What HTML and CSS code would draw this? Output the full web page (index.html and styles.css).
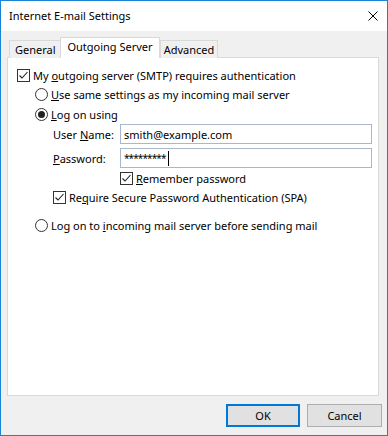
FILE: index.html
```html
<!DOCTYPE html>
<html>
<head>
<meta charset="utf-8">
<link rel="stylesheet" href="styles.css">
</head>
<body>
<div class="window">
  <div class="titlebar">
    <span class="title">Internet E-mail Settings</span>
    <svg class="close" width="10" height="10" viewBox="0 0 10 10"><path d="M0.5 0.5L9.5 9.5M9.5 0.5L0.5 9.5" stroke="#000" stroke-width="1" fill="none"/></svg>
  </div>
  <div class="body">
    <div class="tabs">
      <div class="tab">General</div>
      <div class="tab active">Outgoing Server</div>
      <div class="tab">Advanced</div>
    </div>
    <div class="panel">
      <div class="row r1">
        <span class="check on"><svg width="11" height="11" viewBox="0 0 11 11"><path d="M1.5 5.5L4 8L9.5 2" stroke="#222" stroke-width="1.1" fill="none"/></svg></span>
        <span class="lbl">My <u>o</u>utgoing server (SMTP) requires authentication</span>
      </div>
      <div class="row r2">
        <span class="radio"></span>
        <span class="lbl"><u>U</u>se same settings as my incoming mail server</span>
      </div>
      <div class="row r3">
        <span class="radio on"><span class="dot"></span></span>
        <span class="lbl"><u>L</u>og on using</span>
      </div>
      <div class="field user">
        <span class="flabel">User <u>N</u>ame:</span>
        <div class="input">smith@example.com</div>
      </div>
      <div class="field pass">
        <span class="flabel"><u>P</u>assword:</span>
        <div class="input"><span class="stars">*********</span><span class="caret"></span></div>
      </div>
      <div class="row r4">
        <span class="check on"><svg width="11" height="11" viewBox="0 0 11 11"><path d="M1.5 5.5L4 8L9.5 2" stroke="#222" stroke-width="1.1" fill="none"/></svg></span>
        <span class="lbl"><u>R</u>emember password</span>
      </div>
      <div class="row r5">
        <span class="check on"><svg width="11" height="11" viewBox="0 0 11 11"><path d="M1.5 5.5L4 8L9.5 2" stroke="#222" stroke-width="1.1" fill="none"/></svg></span>
        <span class="lbl">Re<u>q</u>uire Secure Password Authentication (SPA)</span>
      </div>
      <div class="row r6">
        <span class="radio"></span>
        <span class="lbl">Log on to <u>i</u>ncoming mail server before sending mail</span>
      </div>
    </div>
    <div class="footer">
      <div class="btn default">OK</div>
      <div class="btn">Cancel</div>
    </div>
  </div>
</div>
</body>
</html>
```
FILE: styles.css
```css
html, body {
  margin: 0;
  padding: 0;
  background: #f0f0f0;
}
body {
  font-family: "Noto Sans", "Open Sans", sans-serif;
  font-size: 11px;
  color: #000;
}
.window {
  width: 388px;
  height: 436px;
  box-sizing: border-box;
  border: 1px solid #1883d7;
  display: flex;
  flex-direction: column;
  background: #f0f0f0;
}
.titlebar {
  height: 30px;
  background: #fff;
  display: flex;
  align-items: center;
  justify-content: space-between;
  padding: 0 9px 0 8px;
  flex: none;
}
.title {
  font-size: 11px;
  line-height: 16px;
  padding-bottom: 1px;
}
.close {
  display: block;
  margin-top: -1px;
}
.body {
  flex: 1;
  display: flex;
  flex-direction: column;
  padding: 7px 0 0 6px;
}
.tabs {
  display: flex;
  align-items: flex-end;
  height: 20px;
  margin-left: 2px;
  margin-bottom: -1px;
  position: relative;
  z-index: 1;
}
.tab {
  height: 18px;
  box-sizing: border-box;
  border: 1px solid #d9d9d9;
  border-bottom: none;
  padding: 0 5px;
  line-height: 17px;
  background: #f0f0f0;
  white-space: nowrap;
  text-align: center;
}
.tab + .tab { margin-left: -1px; }
.tab:first-child { width: 52px; }
.tab.active {
  height: 21px;
  background: #fff;
  width: 100px;
  padding: 0;
  line-height: 18px;
}
.tab.active + .tab { margin-left: 0; width: 58px; padding: 0; }
.panel {
  width: 372px;
  height: 339px;
  box-sizing: border-box;
  background: #fff;
  border: 1px solid #d9d9d9;
  padding-top: 8px;
}
.row {
  display: flex;
  align-items: center;
  height: 19px;
}
.r1 { padding-left: 9px; }
.r2, .r3 { padding-left: 27px; }
.r3 { height: 20px; }
.r4 { padding-left: 112px; margin-top: 1px; }
.r5 { padding-left: 45px; }
.r6 { padding-left: 27px; margin-top: 9px; height: 18px; }
.check, .radio {
  flex: none;
  width: 13px;
  height: 13px;
  box-sizing: border-box;
  border: 1px solid #333;
  background: #fff;
  margin-right: 3px;
  display: flex;
  align-items: center;
  justify-content: center;
}
.radio { border-radius: 50%; }
.dot {
  width: 7px;
  height: 7px;
  border-radius: 50%;
  background: #222;
}
.check svg { display: block; }
.lbl { white-space: nowrap; }
.field {
  display: flex;
  align-items: center;
  padding-left: 45px;
  height: 20px;
}
.pass { margin-top: 4px; }
.flabel {
  width: 67px;
  flex: none;
}
.input {
  width: 252px;
  height: 20px;
  box-sizing: border-box;
  border: 1px solid #a9b7cc;
  padding-left: 3px;
  line-height: 17px;
  display: flex;
  align-items: center;
}
.stars {
  font-size: 10px;
  letter-spacing: -0.9px;
}
.caret {
  width: 1px;
  height: 15px;
  background: #000;
  margin-left: 2px;
}
.footer {
  display: flex;
  justify-content: flex-end;
  gap: 7px;
  padding: 8px 5px 0 0;
}
.btn {
  width: 75px;
  height: 23px;
  box-sizing: border-box;
  border: 1px solid #adadad;
  background: #e1e1e1;
  display: flex;
  align-items: center;
  justify-content: center;
  padding-bottom: 1px;
}
.btn.default {
  border: 2px solid #0078d7;
  width: 74px;
}
```
